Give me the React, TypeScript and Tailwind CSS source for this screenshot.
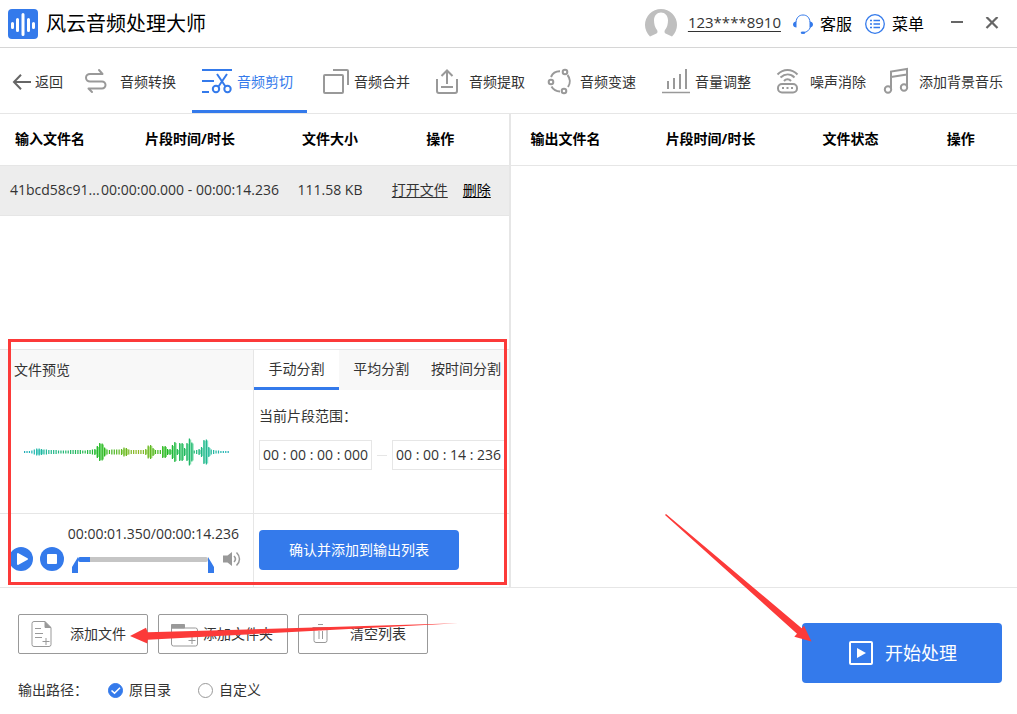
import { useState } from "react";
import type { ReactNode } from "react";

const FONT = "font-['Open_Sans','Noto_Sans_CJK_SC',sans-serif]";

type IconProps = { children: ReactNode };

/* 32×30 line icon used by the tool tabs */
function TabIcon({ children }: IconProps) {
  return (
    <svg className="h-[30px] w-8 shrink-0 overflow-visible" viewBox="0 0 32 30" fill="none" stroke="currentColor" strokeWidth="2" aria-hidden="true">
      {children}
    </svg>
  );
}

const TABS: { label: string; spacing: string; icon: ReactNode }[] = [
  {
    label: "音频转换",
    spacing: "ml-2 mr-[3px]",
    icon: (
      <TabIcon>
        <path d="m14 3 3.500 4H5a4 3.750 0 0 0 0 7.500h12a3.500 3.500 0 0 1 0 7H3.500L7 25" strokeLinejoin="round" strokeLinecap="round" />
      </TabIcon>
    ),
  },
  {
    label: "音频剪切",
    spacing: "ml-2 mr-[5px]",
    icon: (
      <TabIcon>
        <path d="M2 3h30M2 14h12M2 25h7" />
        <path d="m17 7 8.500 12.500M27 7l-8.500 12.500" />
        <circle cx="16" cy="22" r="3.200" />
        <circle cx="27.500" cy="22" r="3.200" />
      </TabIcon>
    ),
  },
  {
    label: "音频合并",
    spacing: "ml-2 mr-[7px]",
    icon: (
      <TabIcon>
        <rect x="9" y="8" width="19" height="18" rx="1" />
        <path d="M18 3h14a1 1 0 0 1 1 1v14" />
      </TabIcon>
    ),
  },
  {
    label: "音频提取",
    spacing: "ml-2 mr-[7px]",
    icon: (
      <TabIcon>
        <path d="M7 12v12a2 2 0 0 0 2 2h16a2 2 0 0 0 2-2V12M17 17V3.500M11.500 9 17 3.500 22.500 9M11 20h12" />
      </TabIcon>
    ),
  },
  {
    label: "音频变速",
    spacing: "ml-2 mr-[3px]",
    icon: (
      <TabIcon>
        <path d="M6 10a9.500 9.500 0 0 1 9-5.700M22.500 8a10 10 0 0 1 .500 12M15 24.500a10 10 0 0 1-8.500-5" />
        <circle cx="20" cy="5" r="2.300" />
        <circle cx="6" cy="15" r="2.300" />
        <circle cx="19" cy="24" r="2.300" />
      </TabIcon>
    ),
  },
  {
    label: "音量调整",
    spacing: "ml-2 mr-[3px]",
    icon: (
      <TabIcon>
        <path d="M2 25.500h28" strokeWidth="1.500" />
        <path d="M8 22v-8M14 22V11M20 22V7M26 22V2" />
      </TabIcon>
    ),
  },
  {
    label: "噪声消除",
    spacing: "ml-2 mr-[3px]",
    icon: (
      <TabIcon>
        <rect x="3" y="17" width="19" height="8.500" rx="4" />
        <path d="M2.500 7.500c6-6 14-6 20 0M5.500 10.500c4.500-4 10-4 14 0M9 14c2-2.300 5-2.300 7 0" />
        <path d="M7 21h2M11.500 21h2M16 21h2" />
      </TabIcon>
    ),
  },
  {
    label: "添加背景音乐",
    spacing: "ml-0.5 mr-[3px]",
    icon: (
      <TabIcon>
        <path d="M7 22V4.500L23 2v18M7 10l16-2.500" />
        <circle cx="4" cy="22.500" r="3.200" />
        <circle cx="20" cy="20.500" r="3.200" />
      </TabIcon>
    ),
  },
];

/* amplitude of each bar of the preview clip */
const WAVE = [
  2, 2, 2, 3, 5, 7, 7, 6, 5, 5, 4, 4, 4, 4, 3, 3, 3, 3, 3, 4, 4, 4, 4, 4, 3, 3, 4, 4, 5, 6, 12, 18, 17, 9, 5, 4, 5, 5, 5,
  5, 6, 9, 8, 5, 4, 4, 4, 4, 4, 4, 6, 13, 14, 8, 4, 4, 4, 12, 12, 6, 6, 14, 20, 6, 18, 18, 8, 18, 27, 19, 3, 4, 6, 10,
  24, 25, 10, 5, 4, 3, 3, 2, 2, 2, 2,
];

function hueAt(t: number) {
  if (t < 0.3) return 185 - (t / 0.3) * 50;
  if (t < 0.55) return 135 - ((t - 0.3) / 0.25) * 60;
  if (t < 0.75) return 75 + ((t - 0.55) / 0.2) * 65;
  return 140 + (t - 0.75) * 180;
}

function Waveform() {
  const pitch = 206 / WAVE.length;
  return (
    <svg className="h-8 w-[206px]" viewBox="0 0 206 32" role="img" aria-label="波形">
      {WAVE.map((h, i) => {
        const hue = hueAt(i / WAVE.length);
        return (
          <g key={i}>
            {h > 5 && <rect x={i * pitch} y={16 - h / 2 + 1} width={pitch} height={h - 2} fill={`hsl(${hue} 60% 70%)`} />}
            <rect x={i * pitch} y={16 - h / 2} width={1.2} height={h} fill={`hsl(${hue} 70% 42%)`} />
          </g>
        );
      })}
    </svg>
  );
}

function HeadRow({ labels, lastClass }: { labels: string[]; lastClass: string }) {
  return (
    <thead>
      <tr className="h-[51px] border-b border-[#e6e6e6] text-sm text-black">
        {labels.map((l, i) => (
          <th key={l} className={`py-0 text-center font-bold ${i === labels.length - 1 ? lastClass : "px-0"}`}>
            {l}
          </th>
        ))}
      </tr>
    </thead>
  );
}

function TimeField({ label, parts }: { label: string; parts: string[] }) {
  return (
    <div role="group" aria-label={label} className="flex h-[30px] w-[113px] shrink-0 items-center border border-[#e6e6e6] px-[3px]">
      {parts.map((p, i) => (
        <div key={i} className="flex items-center">
          {i > 0 && <span className="w-[11px] text-center">:</span>}
          <input
            aria-label={`${label} ${["时", "分", "秒", "毫秒"][i]}`}
            defaultValue={p}
            className={i === 3 ? "w-[25px] bg-transparent outline-none" : "w-4 bg-transparent outline-none"}
          />
        </div>
      ))}
    </div>
  );
}

function FileButton({ label, icon }: { label: string; icon: ReactNode }) {
  return (
    <button type="button" className="flex h-10 w-[130px] items-center rounded-xs border border-[#999] pr-2.5 pl-3 text-[#333]">
      <svg className="h-[30px] w-7 shrink-0" viewBox="0 0 28 30" fill="none" stroke="#999" aria-hidden="true">
        {icon}
      </svg>
      <span className="flex-1 text-center whitespace-nowrap">{label}</span>
    </button>
  );
}

function PathOption({ label, checked, onSelect }: { label: string; checked: boolean; onSelect: () => void }) {
  return (
    <label className="flex items-center gap-1.5">
      <span className="relative flex">
        <input
          type="radio"
          name="output"
          checked={checked}
          onChange={onSelect}
          className="size-[15px] appearance-none rounded-full border border-[#999] bg-white checked:border-[#347aeb] checked:bg-[#347aeb]"
        />
        {checked && (
          <svg className="pointer-events-none absolute inset-0 size-[15px]" viewBox="0 0 15 15" fill="none" stroke="#fff" strokeWidth="1.600" aria-hidden="true">
            <path d="m3.500 7.500 3 2.700 5.500-5.400" />
          </svg>
        )}
      </span>
      {label}
    </label>
  );
}

export default function App() {
  const [tab, setTab] = useState(1);
  const [split, setSplit] = useState(0);
  const [target, setTarget] = useState(0);
  const [position, setPosition] = useState(9);

  return (
    <div className={`${FONT} flex min-h-screen flex-col overflow-hidden bg-white text-sm text-[#333]`}>
      <header className="flex h-12 items-center border-b border-[#d6d6d6] pr-[18px] pl-2 text-base text-black">
        <svg className="size-[30px]" viewBox="0 0 30 30" aria-hidden="true">
          <rect width="30" height="30" rx="4" fill="#347aeb" />
          <path d="M4.500 14.500v4M9.500 10.500v11M15 5.500v20M20.500 10.500v11M25.500 14.500v4" stroke="#fff" strokeWidth="3" strokeLinecap="round" />
        </svg>
        <h1 className="ml-2 text-xl leading-7">风云音频处理大师</h1>

        <div className="ml-auto flex items-center">
          <svg className="mr-[11px] mb-1 size-8" viewBox="0 0 32 32" aria-hidden="true">
            <path
              d="M5 30.500A16 16 0 1 1 27 30.500L20.500 27.500c-1.300-.8-1.200-2.500-.5-3.500 2-2.500 3-6 3-9.500C23 9.500 20 6.500 16 6.500S9 9.500 9 14.500c0 3.500 1 7 3 9.500.7 1 .8 2.700-.5 3.500Z"
              fill="#bfbfbf"
            />
          </svg>
          <a href="#account" className="mb-1 text-[15px] leading-5 text-[#333] underline underline-offset-3">
            123****8910
          </a>
          <button type="button" className="ml-3 flex items-center gap-[7px]">
            <svg className="size-5" viewBox="0 0 20 20" fill="none" aria-hidden="true">
              <path d="M3 8C3.500 3.500 6 1 10 1s6.500 2.500 7 7M17.500 13c-1.500 3.500-3.500 5-6.500 5.500" stroke="#347aeb" />
              <path d="M3.500 7.500v6C1.500 13.500 0 12.500 0 10.500s1.500-3 3.500-3ZM16.500 7.500v6c2 0 3.500-1 3.500-3s-1.500-3-3.500-3Z" fill="#347aeb" />
              <ellipse cx="10" cy="18.700" rx="2.300" ry="1.300" fill="#347aeb" />
            </svg>
            客服
          </button>
          <button type="button" className="ml-[13px] flex items-center gap-[7px]">
            <svg className="size-5" viewBox="0 0 20 20" fill="none" stroke="#347aeb" aria-hidden="true">
              <circle cx="10" cy="10" r="9.300" strokeWidth="1.300" />
              <path d="M5 6.500h2M5 10h2M5 13.500h2M8.500 6.500H15M8.500 10H15M8.500 13.500H15" strokeWidth="1.700" />
            </svg>
            菜单
          </button>
          <button type="button" aria-label="最小化" className="ml-[27px]">
            <svg className="h-3.5 w-3" viewBox="0 0 12 14" stroke="#666" strokeWidth="2" aria-hidden="true">
              <path d="M0 5h12" />
            </svg>
          </button>
          <button type="button" aria-label="关闭" className="ml-[22px]">
            <svg className="size-3.5" viewBox="0 0 14 14" stroke="#666" strokeWidth="2.200" aria-hidden="true">
              <path d="m1.500 0 11 11M12.500 0l-11 11" />
            </svg>
          </button>
        </div>
      </header>

      <nav className="flex h-[66px] border-b border-[#e6e6e6]">
        <button type="button" className="flex w-[77px] shrink-0 items-center gap-1 pt-0.5 pl-3">
          <svg className="h-4 w-[19px]" viewBox="0 0 19 16" fill="none" stroke="#666" strokeWidth="2" aria-hidden="true">
            <path d="M19 8H2M9 .8 2 8l7 7.200" />
          </svg>
          返回
        </button>
        {TABS.map((t, i) => (
          <button
            key={t.label}
            type="button"
            aria-current={tab === i ? "page" : undefined}
            onClick={() => setTab(i)}
            className={
              tab === i
                ? "flex w-[115px] shrink-0 items-center border-b-3 border-[#347aeb] pt-[5px] text-[#347aeb]"
                : "flex min-w-[115px] shrink-0 items-center pt-0.5"
            }
          >
            <span className={`${tab === i ? "text-[#347aeb]" : "text-[#999]"} ${t.spacing}`}>{t.icon}</span>
            {t.label}
          </button>
        ))}
      </nav>

      <main className="flex flex-1">
        <section className="flex w-[50.2%] flex-col border-r-2 border-[#e6e6e6]">
          <table className="w-full table-fixed border-collapse">
            <colgroup>
              <col className="w-[100px]" />
              <col className="w-[180px]" />
              <col className="w-[100px]" />
              <col />
            </colgroup>
            <HeadRow labels={["输入文件名", "片段时间/时长", "文件大小", "操作"]} lastClass="pr-2 pl-0" />
            <tbody>
              <tr className="h-[50px] border-b border-[#e6e6e6] bg-[#ededed] text-center">
                <td className="p-0 pl-2.5 text-left whitespace-nowrap">41bcd58c91...</td>
                <td className="p-0 whitespace-nowrap">00:00:00.000 - 00:00:14.236</td>
                <td className="p-0">111.58 KB</td>
                <td className="p-0 pr-1.5">
                  <a href="#open" className="mr-[15px] underline underline-offset-2">
                    打开文件
                  </a>
                  <a href="#delete" className="text-black underline underline-offset-2">
                    删除
                  </a>
                </td>
              </tr>
            </tbody>
          </table>

          <div className="relative mt-auto flex border-t border-[#e6e6e6]">
            <div className="flex w-[254px] shrink-0 flex-col border-r border-[#e6e6e6]">
              <h2 className="flex h-10 items-center bg-[#f8f8f8] pl-3.5">文件预览</h2>
              <div className="flex h-[124px] items-center justify-center border-b border-[#e6e6e6]">
                <Waveform />
              </div>
              <div className="h-[73px] pt-2.5 pl-[9px]">
                <div className="pr-3.5 text-right leading-5">00:00:01.350/00:00:14.236</div>
                <div className="mt-[3px] flex items-center">
                  <button type="button" aria-label="播放">
                    <svg className="size-6" viewBox="0 0 24 24" aria-hidden="true">
                      <circle cx="12" cy="12" r="12" fill="#347aeb" />
                      <path d="M9 7v10l9-5Z" fill="#fff" stroke="#fff" strokeWidth="2" strokeLinejoin="round" />
                    </svg>
                  </button>
                  <button type="button" aria-label="停止" className="ml-[7px]">
                    <svg className="size-6" viewBox="0 0 24 24" aria-hidden="true">
                      <circle cx="12" cy="12" r="12" fill="#347aeb" />
                      <rect x="7" y="7" width="10" height="10" rx="1" fill="#fff" />
                    </svg>
                  </button>
                  <div className="relative ml-2 flex h-6 w-[142px] items-center px-1.5">
                    <input
                      type="range"
                      aria-label="播放进度"
                      value={position}
                      onChange={(e) => setPosition(Number(e.target.value))}
                      style={{ background: `linear-gradient(to right, #347aeb ${position}%, #c5c5c5 ${position}%)` }}
                      className="h-[5px] w-full appearance-none rounded-xs [&::-webkit-slider-thumb]:w-0 [&::-webkit-slider-thumb]:appearance-none"
                    />
                    <svg className="pointer-events-none absolute bottom-[-2px] left-0 h-4 w-1.5" viewBox="0 0 6 16" fill="#347aeb" aria-hidden="true">
                      <path d="M6 0v16H0v-6Z" />
                    </svg>
                    <svg className="pointer-events-none absolute right-0 bottom-[-2px] h-4 w-1.5" viewBox="0 0 6 16" fill="#347aeb" aria-hidden="true">
                      <path d="M0 0v16h6v-6Z" />
                    </svg>
                  </div>
                  <button type="button" aria-label="音量" className="ml-[9px]">
                    <svg className="h-4 w-[18px]" viewBox="0 0 18 16" fill="none" stroke="#999" strokeWidth="1.500" aria-hidden="true">
                      <path d="M0 4.500h4.500L9 1v14l-4.500-3.500H0Z" fill="#999" stroke="none" />
                      <path d="M11 5c1.800 1.800 1.800 4.200 0 6M13.500 1.500c4 4 4 9 0 13" />
                    </svg>
                  </button>
                </div>
              </div>
            </div>

            <div className="flex min-w-0 flex-1 flex-col">
              <div role="tablist" className="flex h-10 bg-[#f8f8f8]">
                {["手动分割", "平均分割", "按时间分割"].map((l, i) => (
                  <button
                    key={l}
                    role="tab"
                    type="button"
                    aria-selected={split === i}
                    onClick={() => setSplit(i)}
                    className={
                      split === i
                        ? "w-[85px] border-b-3 border-[#347aeb] bg-white whitespace-nowrap"
                        : "w-[85px] border-b-3 border-transparent whitespace-nowrap"
                    }
                  >
                    {l}
                  </button>
                ))}
              </div>
              <div className="h-[124px] border-b border-[#e6e6e6] pt-4 pl-[5px]">
                <p className="leading-5">当前片段范围：</p>
                <div className="mt-3.5 flex items-center">
                  <TimeField label="开始时间" parts={["00", "00", "00", "000"]} />
                  <span className="mx-[5px] h-px w-2.5 shrink-0 bg-[#e6e6e6]" />
                  <TimeField label="结束时间" parts={["00", "00", "14", "236"]} />
                </div>
              </div>
              <div className="pt-4 pl-[5px]">
                <button type="button" className="h-10 w-[200px] rounded-sm bg-[#347aeb] text-white">
                  确认并添加到输出列表
                </button>
              </div>
            </div>
            <div className="pointer-events-none absolute -top-[11px] right-0.5 bottom-0.5 left-2 border-3 border-[#fc3a39]" />
          </div>
        </section>

        <section className="flex-1">
          <table className="w-full table-fixed border-collapse">
            <colgroup>
              <col className="w-[110px]" />
              <col className="w-[180px]" />
              <col className="w-[100px]" />
              <col />
            </colgroup>
            <HeadRow labels={["输出文件名", "片段时间/时长", "文件状态", "操作"]} lastClass="pr-0 pl-1" />
          </table>
        </section>
      </main>

      <footer className="relative flex h-[127px] justify-between border-t border-[#e6e6e6] pr-[15px] pl-[18px]">
        <div className="pt-[26px]">
          <div className="flex gap-2.5">
            <FileButton
              label="添加文件"
              icon={
                <>
                  <path d="M14 2.500H3A2 2 0 0 0 1 4.500v21a2 2 0 0 0 2 2h15a2 2 0 0 0 2-2V9M4 9.500h6M4 14.500h8M4 18.500h7M15 19v7M11.500 22.500h7" />
                  <path d="m14 2.500 6 6h-6Z" fill="#999" />
                </>
              }
            />
            <FileButton
              label="添加文件夹"
              icon={
                <>
                  <path d="M.5 9h24a2 2 0 0 1 2 2v14a2 2 0 0 1-2 2h-22a2 2 0 0 1-2-2ZM21 18v7M17.500 21.500h7" />
                  <path d="M.5 5.500h13V9H.5Z" fill="#999" />
                </>
              }
            />
            <FileButton
              label="清空列表"
              icon={<path d="M7 5.500h5M1.500 8.500h16M3 8.500v13a2 2 0 0 0 2 2h9a2 2 0 0 0 2-2v-13M8 12v8M11.500 12v8" />}
            />
          </div>
          <div role="radiogroup" aria-label="输出路径" className="mt-[26px] flex items-center leading-5">
            <span className="w-[90px]">输出路径：</span>
            <PathOption label="原目录" checked={target === 0} onSelect={() => setTarget(0)} />
            <span className="w-[27px]" />
            <PathOption label="自定义" checked={target === 1} onSelect={() => setTarget(1)} />
          </div>
        </div>

        <div className="relative mt-[35px] h-[60px]">
          <button type="button" className="flex h-[60px] w-[200px] items-center justify-center gap-3 rounded-sm bg-[#347aeb] pl-0.5 text-lg text-white">
            <svg className="size-6" viewBox="0 0 24 24" aria-hidden="true">
              <rect x="1" y="1" width="22" height="22" rx="1" fill="none" stroke="#fff" strokeWidth="2" />
              <path d="M8 7v10l9-5Z" fill="#fff" />
            </svg>
            开始处理
          </button>
          <svg className="pointer-events-none absolute top-[-109px] left-[-137px] h-32 w-[147px]" viewBox="0 0 147 128" fill="#fc3a39" aria-hidden="true">
            <path d="M0 1 1 0 136.700 114.300 139 111.700 146.500 127.500 129.300 122.700 132 119.700Z" />
          </svg>
        </div>

        <svg className="pointer-events-none absolute top-[35px] left-[130px] h-[21px] w-[328px]" viewBox="0 0 328 21" fill="#fc3a39" aria-hidden="true">
          <path d="M0 13 16 4.700 17.700 9.300 328 .3 17.700 16.700 17.300 20.500Z" />
        </svg>
      </footer>
    </div>
  );
}
